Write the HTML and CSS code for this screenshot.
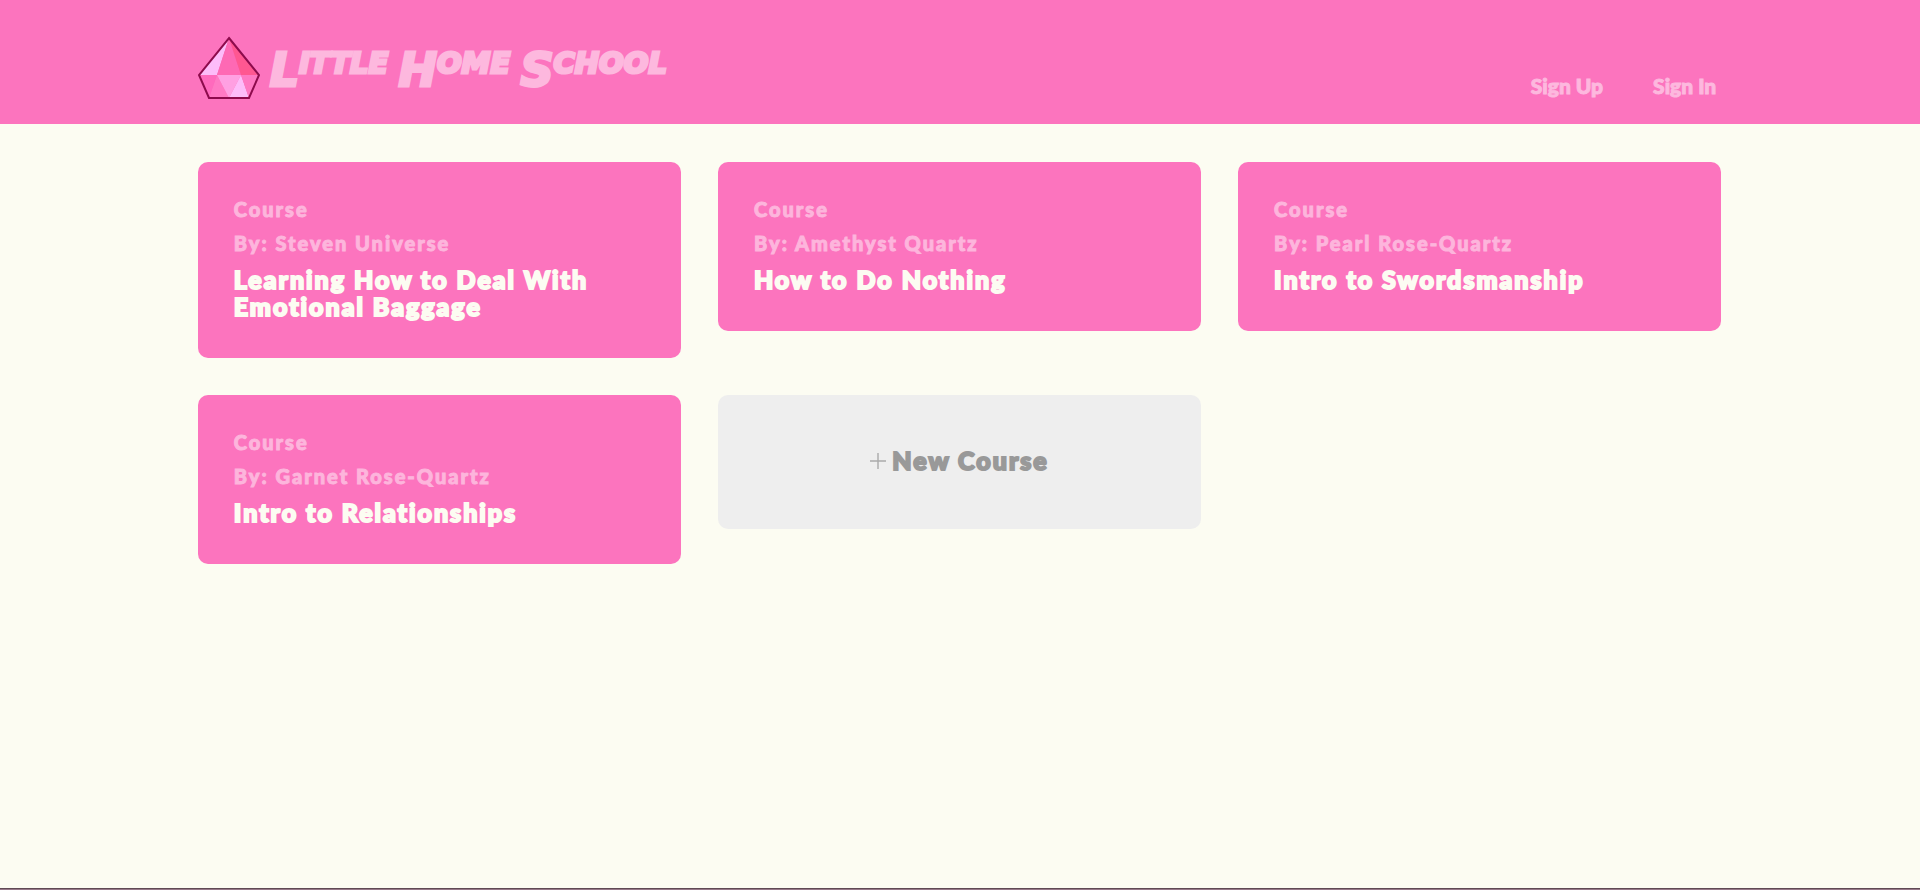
FILE: index.html
```html
<!DOCTYPE html>
<html lang="en">
<head>
<meta charset="utf-8">
<title>Little Home School</title>
<link rel="stylesheet" href="styles.css">
</head>
<body>
<header class="site-header">
  <a class="brand" href="#">
    <svg class="brand-gem" viewBox="1 0 62 64" aria-hidden="true">
      <path fill="#fa62b0" d="M32 2 62 39 52 62H12L2 39z"/>
      <path fill="#fdbcf9" d="M32 2 20 39H2z"/>
      <path fill="#fe69b4" d="M32 2 20 39h24z"/>
      <path fill="#ff5791" d="M32 2 44 39h18z"/>
      <path fill="#ff6abd" d="M2 39h18L12 62z"/>
      <path fill="#ff7ac4" d="M20 39 12 62h20z"/>
      <path fill="#ffa0e2" d="M20 39h24L32 62z"/>
      <path fill="#fdbcf9" d="M44 39 32 62h20z"/>
      <path fill="#ff78c2" d="M44 39h18L52 62z"/>
      <path fill="none" stroke="#8d0b4c" stroke-width="2" d="M32 2 62 39 52 62H12L2 39z"/>
    </svg>
    <span class="brand-name"><span class="brand-initial">L</span>ITTLE <span class="brand-initial">H</span>OME <span class="brand-initial">S</span>CHOOL</span>
  </a>
  <nav class="site-nav">
    <a href="#">Sign Up</a>
    <a href="#">Sign In</a>
  </nav>
</header>
<main class="courses">
  <a class="card" href="#">
    <p class="card-meta">Course</p>
    <p class="card-meta">By: Steven Universe</p>
    <h2 class="card-title">Learning How to Deal With Emotional Baggage</h2>
  </a>
  <a class="card" href="#">
    <p class="card-meta">Course</p>
    <p class="card-meta">By: Amethyst Quartz</p>
    <h2 class="card-title">How to Do Nothing</h2>
  </a>
  <a class="card" href="#">
    <p class="card-meta">Course</p>
    <p class="card-meta">By: Pearl Rose-Quartz</p>
    <h2 class="card-title">Intro to Swordsmanship</h2>
  </a>
  <a class="card" href="#">
    <p class="card-meta">Course</p>
    <p class="card-meta">By: Garnet Rose-Quartz</p>
    <h2 class="card-title">Intro to Relationships</h2>
  </a>
  <button class="new-course" type="button">
    <svg class="plus" viewBox="0 0 16 16" aria-hidden="true"><path fill="none" stroke="#aaa" stroke-width="1.4" d="M8 0v16M0 8h16"/></svg>
    New Course
  </button>
</main>
<footer class="site-footer"></footer>
</body>
</html>
```
FILE: styles.css
```css
* {
  box-sizing: border-box;
}

body {
  margin: 0;
  min-height: 100vh;
  display: flex;
  flex-direction: column;
  background: #fcfcf2;
  font-family: Lato, "Open Sans", sans-serif;
  font-weight: 900;
}

a {
  color: inherit;
  text-decoration: none;
}

.site-header {
  display: flex;
  justify-content: space-between;
  align-items: flex-end;
  padding: 36px 10.35% 24px 10.3%;
  background: #fc74be;
  color: #fdb8de;
}

.brand {
  display: flex;
  align-items: flex-start;
  gap: 10px;
}

.brand-gem {
  width: 62px;
  height: 64px;
}

.brand-name {
  padding-top: 2px;
  font: italic bold 29px/50px "DejaVu Sans", sans-serif;
  -webkit-text-stroke: 3px #fdb8de;
  white-space: nowrap;
}

.brand-initial {
  font-size: 46px;
  line-height: 1;
  vertical-align: -13px;
}

.site-nav {
  display: flex;
  gap: 50px;
  padding: 0 5px 2px 0;
  font-size: 21px;
  line-height: 24px;
  -webkit-text-stroke: 1px #fdb8de;
}

.courses {
  flex: 1;
  display: grid;
  grid-template-columns: repeat(3, 1fr);
  gap: 37px;
  align-items: start;
  align-content: start;
  padding: 38px 10.35% 38px 10.3%;
}

.card {
  display: block;
  padding: 35px 36px 38px;
  border-radius: 10px;
  background: #fc74be;
}

.card-meta {
  margin: 0 0 10px;
  color: #fdb5dc;
  font-size: 20px;
  line-height: 24px;
  letter-spacing: 2px;
  -webkit-text-stroke: 1px #fdb5dc;
}

.card-title {
  margin: 0;
  padding-top: 1px;
  color: #fcfcf2;
  font-size: 25px;
  font-weight: 900;
  line-height: 27px;
  letter-spacing: 2px;
  -webkit-text-stroke: 2px #fcfcf2;
}

.new-course {
  display: flex;
  justify-content: center;
  align-items: center;
  gap: 6px;
  padding: 52px 36px 55px;
  border: 0;
  border-radius: 10px;
  background: #eee;
  color: #999;
  font: inherit;
  font-size: 25px;
  line-height: 27px;
  letter-spacing: 2px;
  -webkit-text-stroke: 2px #999;
}

.plus {
  width: 16px;
  height: 16px;
}

.site-footer {
  height: 2px;
  border-top: 1px solid #5f4a54;
  background: #97788a;
}
```
